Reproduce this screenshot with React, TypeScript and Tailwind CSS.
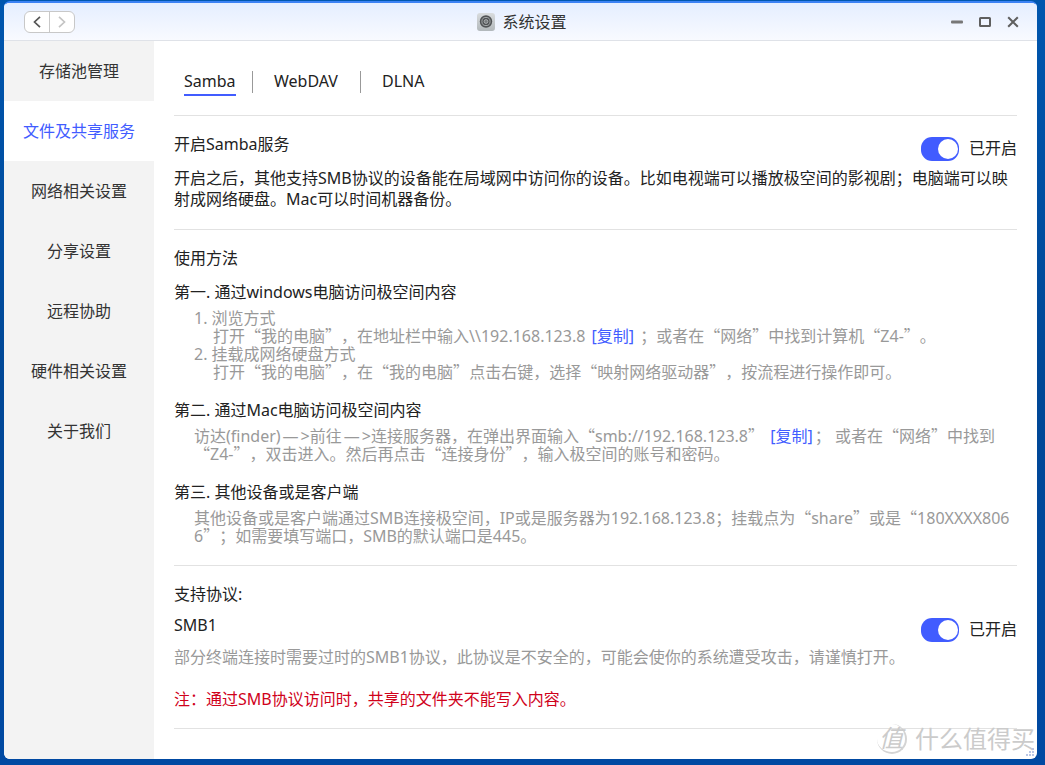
import { useState, type ReactNode } from "react";

const menu = [
  "存储池管理",
  "文件及共享服务",
  "网络相关设置",
  "分享设置",
  "远程协助",
  "硬件相关设置",
  "关于我们",
];

const tabs = [
  { name: "Samba", width: "min-w-[52px]" },
  { name: "WebDAV", width: "min-w-[70px]" },
  { name: "DLNA", width: "min-w-11" },
];

// Curly quotes take the full-width form of the Chinese font
function Zh({ children }: { children: string }) {
  return (
    <>
      {children.split(/([“”])/).map((part, i) =>
        i % 2 === 1 ? (
          <span key={i} className="font-['Noto_Sans_CJK_SC',sans-serif] leading-none">
            {part}
          </span>
        ) : (
          part
        )
      )}
    </>
  );
}

function Arrow() {
  return (
    <>
      <span className="mx-0.5">—</span>&gt;
    </>
  );
}

function CopyButton({ value }: { value: string }) {
  return (
    <button
      type="button"
      className="mx-0.5 cursor-pointer leading-none text-[#415cff]"
      onClick={() => navigator.clipboard?.writeText(value)}
    >
      [复制]
    </button>
  );
}

function Toggle({ id }: { id: string }) {
  const [on, setOn] = useState(true);
  return (
    <label htmlFor={id} className="flex items-center gap-2.5 leading-6">
      <input
        id={id}
        type="checkbox"
        checked={on}
        onChange={(e) => setOn(e.target.checked)}
        className="flex h-6 w-[38px] appearance-none items-center rounded-[11px] bg-gray-300 px-px before:size-5 before:rounded-full before:bg-white checked:justify-end checked:bg-[#415cff]"
      />
      <span className="pb-0.5">{on ? "已开启" : "已关闭"}</span>
    </label>
  );
}

function Step({ title, children }: { title: string; children: ReactNode }) {
  return (
    <section>
      <h3 className="leading-6">{title}</h3>
      <div className="mt-[5px] pl-5 leading-[18px] text-[#999]">{children}</div>
    </section>
  );
}

function TitleBar() {
  return (
    <header className="relative flex h-[38px] shrink-0 items-center justify-between border-b border-[#dfe2e8] bg-linear-to-b from-[#e5eeff] to-[#f8faff] pt-px pr-[18px] pl-5">
      <div className="flex h-[22px] w-[51px] divide-x divide-[#c8c8c8] rounded-md border border-[#c8c8c8] bg-white">
        <button type="button" aria-label="后退" className="flex flex-1 items-center justify-center">
          <svg width="8" height="12" viewBox="0 0 8 12" fill="none" stroke="#555" strokeWidth="1.7">
            <path d="M7 .8 1.5 6 7 11.2" />
          </svg>
        </button>
        <button type="button" aria-label="前进" className="flex flex-1 items-center justify-center">
          <svg width="8" height="12" viewBox="0 0 8 12" fill="none" stroke="#c4c4c4" strokeWidth="1.7">
            <path d="M1 .8 6.5 6 1 11.2" />
          </svg>
        </button>
      </div>

      <h1 className="absolute left-1/2 flex -translate-x-1/2 items-center gap-2 pl-0.5 text-[#333]">
        <svg width="18" height="18" viewBox="0 0 18 18" fill="none">
          <defs>
            <linearGradient id="plate" x1="0" y1="0" x2="0" y2="1">
              <stop offset="0" stopColor="#d9dcde" />
              <stop offset="1" stopColor="#b2b8bb" />
            </linearGradient>
          </defs>
          <rect width="18" height="18" rx="3" fill="url(#plate)" />
          <circle cx="9" cy="8.5" r="6.2" fill="#505355" />
          <circle cx="9" cy="8.5" r="4.1" stroke="#a4a8aa" />
          <circle cx="9" cy="8.5" r="1.9" fill="#777b7d" stroke="#b5b9bb" strokeWidth=".8" />
        </svg>
        系统设置
      </h1>

      <div className="flex items-center gap-4">
        <button type="button" aria-label="最小化">
          <svg className="block" width="12" height="12" viewBox="0 0 12 12">
            <rect y="4.5" width="12" height="3" rx="1" fill="#777" />
          </svg>
        </button>
        <button type="button" aria-label="最大化">
          <svg className="block" width="12" height="12" viewBox="0 0 12 12" fill="none">
            <rect x="1" y="2" width="10" height="8" rx=".5" stroke="#5f5f5f" strokeWidth="2" />
          </svg>
        </button>
        <button type="button" aria-label="关闭">
          <svg className="block" width="12" height="12" viewBox="0 0 12 12" stroke="#5f5f5f" strokeWidth="2">
            <path d="m1.2 1.2 9.6 9.6M10.8 1.2l-9.6 9.6" />
          </svg>
        </button>
      </div>
    </header>
  );
}

export default function App() {
  const [tab, setTab] = useState("Samba");

  return (
    <div className="flex min-h-screen flex-col bg-linear-to-b from-[#0056ae] via-[#004796] to-[#0049a2] pt-px pr-2 pb-1.5 pl-1 font-['Noto_Sans','Noto_Sans_CJK_SC',sans-serif] text-base text-[#222] [text-spacing-trim:space-all]">
      <div className="relative flex flex-1 flex-col overflow-hidden rounded-md border-t-2 border-[#3b82f4] bg-white">
        <TitleBar />

        <div className="flex flex-1">
          <nav className="w-[150px] shrink-0 bg-[#f3f3f3]">
            {menu.map((item, i) => (
              <button
                key={item}
                type="button"
                className={
                  i === 1
                    ? "block h-[60px] w-full bg-white text-[#415cff]"
                    : "block h-[60px] w-full text-[#333]"
                }
              >
                {item}
              </button>
            ))}
          </nav>

          <main className="min-w-0 flex-1 px-5">
            <div className="flex items-start border-b border-[#e2e2e2] pt-[30px] pb-[19px] pl-2.5">
              {tabs.map(({ name, width }, i) => (
                <div key={name} className="flex">
                  {i > 0 && <span className="mr-[21px] ml-4 h-[22px] w-px bg-[#999]" />}
                  <button
                    type="button"
                    onClick={() => setTab(name)}
                    className={`${width} text-left ${
                      tab === name
                        ? "h-[25px] border-b-2 border-[#415cff] pb-0.5 leading-[21px]"
                        : "h-[25px] pb-1 leading-[21px]"
                    }`}
                  >
                    {name}
                  </button>
                </div>
              ))}
            </div>

            {/* Samba switch */}
            <section className="border-b border-[#e2e2e2] pt-4 pb-[19px]">
              <div className="flex h-[34px] items-center justify-between">
                <h2 className="self-start leading-6">开启Samba服务</h2>
                <Toggle id="samba" />
              </div>
              <p className="mt-0.5 leading-[21px]">
                开启之后，其他支持SMB协议的设备能在局域网中访问你的设备。比如电视端可以播放极空间的影视剧；电脑端可以映射成网络硬盘。Mac可以时间机器备份。
              </p>
            </section>

            {/* How to connect */}
            <section className="border-b border-[#e2e2e2] pt-4 pb-5">
              <h2 className="mb-2.5 leading-6">使用方法</h2>
              <div className="flex flex-col gap-[17px]">
                <Step title="第一. 通过windows电脑访问极空间内容">
                  <ol>
                    <li>
                      1. 浏览方式
                      <p className="pl-[19px]">
                        <Zh>打开“我的电脑”，在地址栏中输入\\192.168.123.8</Zh>{" "}
                        <CopyButton value="\\192.168.123.8" />{" "}
                        <Zh>；或者在“网络”中找到计算机“Z4-”。</Zh>
                      </p>
                    </li>
                    <li>
                      2. 挂载成网络硬盘方式
                      <p className="pl-[19px]">
                        <Zh>打开“我的电脑”，在“我的电脑”点击右键，选择“映射网络驱动器”，按流程进行操作即可。</Zh>
                      </p>
                    </li>
                  </ol>
                </Step>
                <Step title="第二. 通过Mac电脑访问极空间内容">
                  <p>
                    访达(finder)
                    <Arrow />
                    前往
                    <Arrow />
                    <Zh>连接服务器，在弹出界面输入“smb://192.168.123.8”</Zh>{" "}
                    <CopyButton value="smb://192.168.123.8" />
                    <Zh>； 或者在“网络”中找到</Zh>
                    <wbr />
                    <Zh>“Z4-”，双击进入。然后再点击“连接身份”，输入极空间的账号和密码。</Zh>
                  </p>
                </Step>
                <Step title="第三. 其他设备或是客户端">
                  <p className="break-all">
                    <Zh>其他设备或是客户端通过SMB连接极空间，IP或是服务器为192.168.123.8；挂载点为“share”或是“180XXXX8066”；如需要填写端口，SMB的默认端口是445。</Zh>
                  </p>
                </Step>
              </div>
            </section>

            {/* Protocols */}
            <section className="border-b border-[#e2e2e2] pt-4 pb-[18px]">
              <h2 className="leading-6">支持协议:</h2>
              <div className="mt-[7px] flex h-[34px] items-center justify-between">
                <h3 className="self-start leading-6">SMB1</h3>
                <Toggle id="smb1" />
              </div>
              <p className="leading-[21px] text-[#999]">
                部分终端连接时需要过时的SMB1协议，此协议是不安全的，可能会使你的系统遭受攻击，请谨慎打开。
              </p>
              <p className="mt-[21px] leading-[21px] text-[#d0021b]">
                注：通过SMB协议访问时，共享的文件夹不能写入内容。
              </p>
            </section>
          </main>
        </div>

        {/* Watermark */}
        <div className="pointer-events-none absolute right-0.5 bottom-0.5 flex items-center gap-2 text-[#cbcbcb]">
          <span className="flex size-[30px] items-center justify-center rounded-full border-r-2 border-b-2 border-[#d4d4d4] text-2xl leading-none italic">
            值
          </span>
          <span className="text-2xl leading-9">什么值得买</span>
        </div>
        <svg className="absolute right-[3px] bottom-[3px]" width="8" height="8" viewBox="0 0 8 8" fill="#b9c6e6">
          <path d="M6 0h2v2H6zM3 3h2v2H3zM6 3h2v2H6zM0 6h2v2H0zM3 6h2v2H3zM6 6h2v2H6z" />
        </svg>
      </div>
    </div>
  );
}
